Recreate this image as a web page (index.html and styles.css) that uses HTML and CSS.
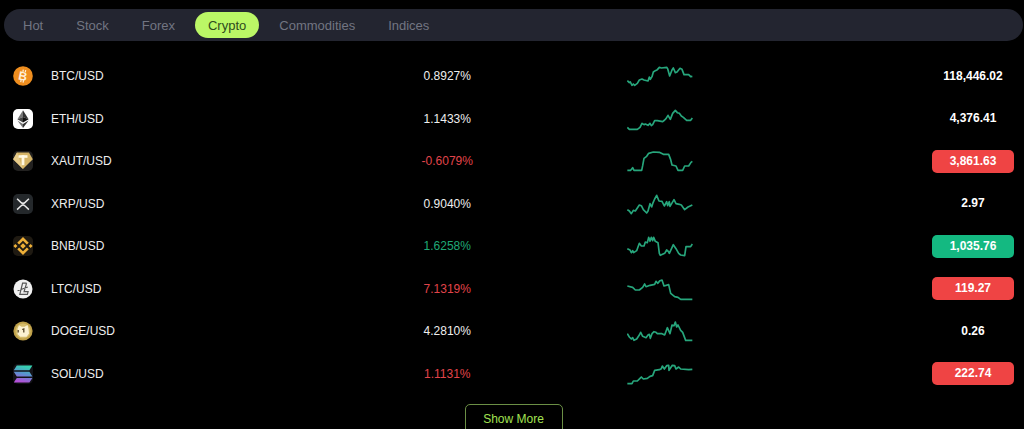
FILE: index.html
```
<!DOCTYPE html>
<html lang="en">
<head>
    <meta charset="UTF-8">
    <meta name="viewport" content="width=device-width, initial-scale=1.0">
    <title>Markets</title>
    <link rel="stylesheet" href="styles.css">
</head>
<body>
    <main class="markets">
        <nav class="tabs">
            <button type="button" class="tab">Hot</button>
            <button type="button" class="tab">Stock</button>
            <button type="button" class="tab">Forex</button>
            <button type="button" class="tab active">Crypto</button>
            <button type="button" class="tab">Commodities</button>
            <button type="button" class="tab">Indices</button>
        </nav>

        <table class="quotes">
            <colgroup>
                <col class="col-symbol">
                <col class="col-change">
                <col class="col-chart">
                <col class="col-price">
            </colgroup>
            <tbody>
                <tr>
                    <th scope="row">
                        <div class="symbol">
                            <svg class="coin" viewBox="0 0 20 20" aria-hidden="true">
                                <circle cx="10" cy="10" r="9.8" fill="#ef8e1f"/>
                                <g transform="rotate(12 10 10)">
                                    <path d="M9 3.6v2.4M11.4 3.6v2.4M9 14v2.4M11.4 14v2.4" stroke="#fff0da" stroke-width="1.2"/>
                                    <text x="10" y="14.3" text-anchor="middle" class="coin-letter">B</text>
                                </g>
                            </svg>
                            <span>BTC/USD</span>
                        </div>
                    </th>
                    <td>0.8927%</td>
                    <td><svg class="chart" viewBox="0 0 198 72" aria-hidden="true"><polyline points="1,50 7,56 10,54 15,64 19,60 23,64 31,58 37,48 45,45 51,48 63,51 67,39 70,46 75,38 79,24 85,20 91,17 97,10 103,12 119,10 122,14 128,36 135,18 139,12 145,26 150,24 159,13 165,16 171,32 185,32 191,38 196,37"/></svg></td>
                    <td><span class="price">118,446.02</span></td>
                </tr>
                <tr>
                    <th scope="row">
                        <div class="symbol">
                            <svg class="coin" viewBox="0 0 20 20" aria-hidden="true">
                                <rect width="20" height="20" rx="5" fill="#fff"/>
                                <path d="M10 1.2 4.4 10.2 10 8Z" fill="#777"/>
                                <path d="M10 1.2 15.6 10.2 10 8Z" fill="#333"/>
                                <path d="M4.4 10.2 10 8v5.6Z" fill="#444"/>
                                <path d="M15.6 10.2 10 8v5.6Z" fill="#111"/>
                                <path d="M4.4 11.6 10 14.9v4Z" fill="#777"/>
                                <path d="M15.6 11.6 10 14.9v4Z" fill="#333"/>
                            </svg>
                            <span>ETH/USD</span>
                        </div>
                    </th>
                    <td>1.1433%</td>
                    <td><svg class="chart" viewBox="0 0 198 72" aria-hidden="true"><polyline points="1,61 7,67 31,67 39,61 45,49 51,53 55,51 63,55 69,49 73,56 77,53 83,41 91,41 107,44 113,39 117,35 123,25 130,37 137,19 145,10 151,17 157,19 163,27 169,31 179,40 191,40 196,33"/></svg></td>
                    <td><span class="price">4,376.41</span></td>
                </tr>
                <tr>
                    <th scope="row">
                        <div class="symbol">
                            <svg class="coin" viewBox="0 0 20 20" aria-hidden="true">
                                <rect width="20" height="20" rx="5" fill="#222120"/>
                                <path d="M4 1.5h12l3.8 6.7L10 18 .2 8.2Z" fill="#d5b467"/>
                                <path d="M4 1.5.2 8.2 10 18Z" fill="#e6cb8a"/>
                                <rect x="5.5" y="4.2" width="9" height="2.6" fill="#fff8e2"/>
                                <rect x="8.6" y="4.2" width="2.8" height="10" fill="#fff8e2"/>
                            </svg>
                            <span>XAUT/USD</span>
                        </div>
                    </th>
                    <td class="down">-0.6079%</td>
                    <td><svg class="chart" viewBox="0 0 198 72" aria-hidden="true"><polyline points="1,64 11,64 17,56 21,64 44,64 47,50 51,28 59,22 65,13 79,9 97,10 109,16 125,16 131,32 135,48 147,51 153,64 167,64 173,51 185,51 192,40 196,37"/></svg></td>
                    <td><span class="price price-down">3,861.63</span></td>
                </tr>
                <tr>
                    <th scope="row">
                        <div class="symbol">
                            <svg class="coin" viewBox="0 0 20 20" aria-hidden="true">
                                <rect width="20" height="20" rx="5" fill="#24282b"/>
                                <path d="M4.1 4.8l3.8 3.6q2.1 1.9 4.2 0L15.9 4.8M4.1 15.6l3.8-3.6q2.1-1.9 4.2 0l3.8 3.6" fill="none" stroke="#e8e8e8" stroke-width="1.5"/>
                            </svg>
                            <span>XRP/USD</span>
                        </div>
                    </th>
                    <td>0.9040%</td>
                    <td><svg class="chart" viewBox="0 0 198 72" aria-hidden="true"><polyline points="1,53 7,57 13,65 19,55 25,57 37,39 43,41 49,53 59,63 63,57 69,35 74,45 77,35 83,21 89,10 96,27 105,28 112,42 119,29 122,41 127,29 129,43 141,23 147,35 157,37 163,39 173,53 183,45 196,39"/></svg></td>
                    <td><span class="price">2.97</span></td>
                </tr>
                <tr>
                    <th scope="row">
                        <div class="symbol">
                            <svg class="coin" viewBox="0 0 20 20" aria-hidden="true">
                                <rect width="20" height="20" rx="5" fill="#1f1a12"/>
                                <path d="M5.2 7.6 10 2.8l4.8 4.8M5.2 12.4l4.8 4.8 4.8-4.8" fill="none" stroke="#eeb038" stroke-width="2.7"/>
                                <path d="m10 7.2 2.8 2.8-2.8 2.8L7.2 10ZM2.4 8 4.4 10l-2 2-2-2ZM17.6 8l2 2-2 2-2-2Z" fill="#eeb038"/>
                            </svg>
                            <span>BNB/USD</span>
                        </div>
                    </th>
                    <td class="up">1.6258%</td>
                    <td><svg class="chart" viewBox="0 0 198 72" aria-hidden="true"><polyline points="1,44 9,48 13,56 17,50 20,56 29,50 37,28 43,36 51,36 55,24 61,26 65,10 69,22 73,10 77,20 80,10 85,22 93,26 97,58 100,64 113,58 119,48 124,52 127,58 139,32 147,44 155,58 161,63 173,65 177,38 191,38 196,30"/></svg></td>
                    <td><span class="price price-up">1,035.76</span></td>
                </tr>
                <tr>
                    <th scope="row">
                        <div class="symbol">
                            <svg class="coin" viewBox="0 0 20 20" aria-hidden="true">
                                <circle cx="10" cy="10" r="9.5" fill="#f0f0f0"/>
                                <path d="M13.6 4.2H9.6L6.8 15.4H14.4l.7-2.8h-4l2.5-8.4M4.6 11.8l10.2-3.8" fill="none" stroke="#555" stroke-width="1.2"/>
                            </svg>
                            <span>LTC/USD</span>
                        </div>
                    </th>
                    <td class="down">7.1319%</td>
                    <td><svg class="chart" viewBox="0 0 198 72" aria-hidden="true"><polyline points="1,27 17,31 25,39 37,39 47,31 53,21 57,29 69,25 83,22 87,13 92,19 99,11 105,9 111,27 125,23 131,49 143,59 153,61 161,67 196,67"/></svg></td>
                    <td><span class="price price-down">119.27</span></td>
                </tr>
                <tr>
                    <th scope="row">
                        <div class="symbol">
                            <svg class="coin" viewBox="0 0 20 20" aria-hidden="true">
                                <circle cx="10" cy="10" r="9.6" fill="#bfa14a"/>
                                <circle cx="10" cy="10" r="7.6" fill="#d6bd6c"/>
                                <path d="M4.6 7.5 6 4.2l2.6 1.6h3L14.6 4l1 4.5.4 4-2.4 3.3H7.2l-2.6-2.6Z" fill="#fbf2d2"/>
                                <path d="M5.2 9v2.6M9.2 8.5l1.6-.6v3.6" fill="none" stroke="#57482a" stroke-width="1.3"/>
                            </svg>
                            <span>DOGE/USD</span>
                        </div>
                    </th>
                    <td>4.2810%</td>
                    <td><svg class="chart" viewBox="0 0 198 72" aria-hidden="true"><polyline points="1,44 7,54 13,60 17,56 21,64 29,60 37,48 41,40 47,52 57,56 63,48 67,46 70,58 75,44 81,38 87,40 91,44 105,44 113,48 121,26 129,44 135,18 141,20 145,9 149,24 153,18 161,34 167,40 176,64 196,64"/></svg></td>
                    <td><span class="price">0.26</span></td>
                </tr>
                <tr>
                    <th scope="row">
                        <div class="symbol">
                            <svg class="coin" viewBox="0 0 20 20" aria-hidden="true">
                                <defs>
                                    <linearGradient id="sol" x1="12" y1="2" x2="8" y2="18" gradientUnits="userSpaceOnUse">
                                        <stop offset="0" stop-color="#35d3b0"/>
                                        <stop offset=".5" stop-color="#5c8fd0"/>
                                        <stop offset="1" stop-color="#b450d8"/>
                                    </linearGradient>
                                </defs>
                                <rect width="20" height="20" rx="5" fill="#131218"/>
                                <path d="M3.8 1.6H19.4L16.4 6.2H.8ZM.8 7.8H16.4L19.4 12.4H3.8ZM3.8 14H19.4L16.4 18.6H.8Z" fill="url(#sol)"/>
                            </svg>
                            <span>SOL/USD</span>
                        </div>
                    </th>
                    <td class="down">1.1131%</td>
                    <td><svg class="chart" viewBox="0 0 198 72" aria-hidden="true"><polyline points="1,65 15,65 19,57 31,57 39,49 43,45 49,51 61,49 69,43 77,41 83,25 97,23 103,20 106,12 112,21 119,11 125,10 126,25 136,10 143,11 147,21 155,15 161,21 185,23 196,22"/></svg></td>
                    <td><span class="price price-down">222.74</span></td>
                </tr>
            </tbody>
        </table>

        <button type="button" class="show-more">Show More</button>
    </main>
</body>
</html>
```
FILE: styles.css
```
* { box-sizing: border-box; }
body { margin: 0; background: #000; color: #eee; font-family: "Liberation Sans", Arial, sans-serif; font-size: 12px; }
button { font-family: inherit; cursor: pointer; }

.markets { display: flex; flex-direction: column; height: 100vh; overflow: hidden; padding: 9px 1px 0 4px; }
.markets > * { flex-shrink: 0; }

.tabs { display: flex; gap: 7px; padding: 3px 6px; border-radius: 16px; background: #232530; }
.tab { height: 26px; padding: 0 13px; border: none; border-radius: 13px; background: transparent; color: #727582; font-size: 13px; }
.tab:hover { color: #fff; }
.tab.active { background: #bbf766; color: #2f4a1c; }

.quotes { width: 100%; margin-top: 14px; border-collapse: collapse; table-layout: fixed; }
.col-symbol { width: 33%; }
.col-change, .col-chart { width: 21%; }
.quotes tr { height: 42px; }
.quotes tr:nth-child(even) { height: 43px; }
.quotes th, .quotes td { padding: 0; text-align: center; font-weight: normal; }
.quotes th { padding-left: 9px; }
.quotes td:nth-child(3) { padding-right: 3px; }
.quotes td:last-child { padding-right: 9px; text-align: right; }

.symbol { display: flex; align-items: center; gap: 18px; }
.coin { width: 20px; height: 20px; }
.coin-letter { font-size: 12px; font-weight: bold; fill: #fff0da; }
.chart { display: block; width: 66px; height: 24px; margin: 0 auto; }
.chart polyline { fill: none; stroke: #27a67c; stroke-width: 5; stroke-linejoin: round; }

.price { display: inline-block; width: 82px; border-radius: 5px; color: #fff; font-weight: bold; line-height: 23px; text-align: center; vertical-align: middle; }
.price-up { background: #14b981; }
.price-down { background: #ef4444; }
.up { color: #1fa876; }
.down { color: #e0444a; }

.show-more { align-self: center; width: 98px; height: 30px; margin-top: 9px; border: 1px solid #6b8f45; border-radius: 5px; background: transparent; color: #a3e252; font-size: 12px; }
.show-more:hover { background: #1a2410; }
```
